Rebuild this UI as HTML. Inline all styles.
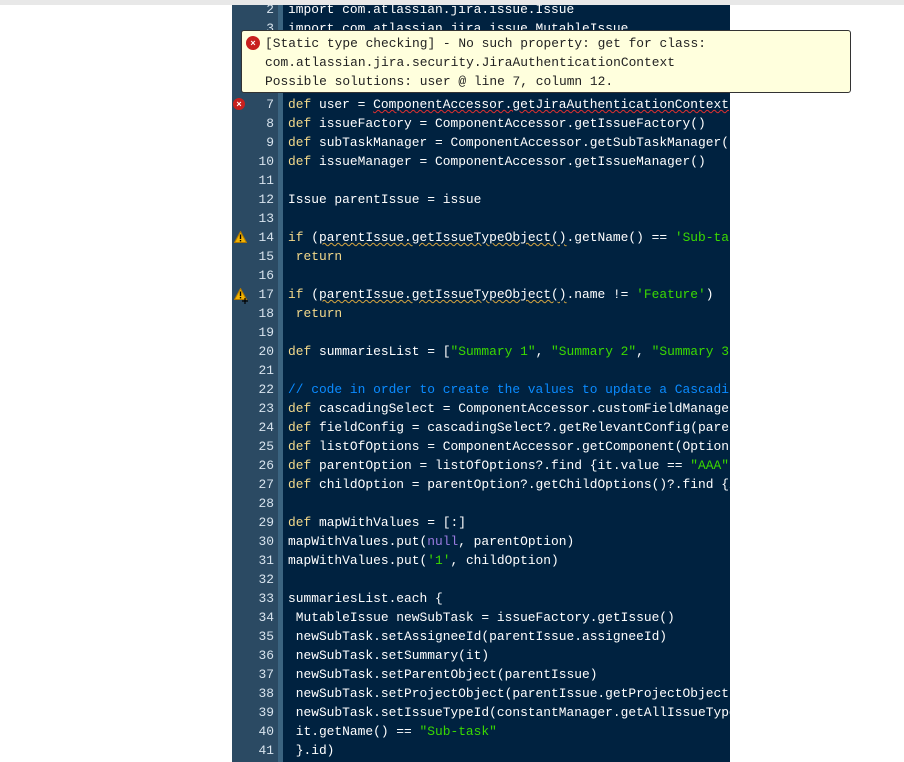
<!DOCTYPE html>
<html><head><meta charset="utf-8"><style>
body{margin:0;width:904px;height:762px;background:#fff;position:relative;overflow:hidden;font-family:"Liberation Mono",monospace}
#top{position:absolute;left:0;top:0;width:904px;height:5px;background:#e8e8e8}
#ed{position:absolute;left:232px;top:5px;width:498px;height:757px;background:#002240;overflow:hidden}
#gut{position:absolute;left:0;top:0;width:46px;height:100%;background:#2b4a63}
#gut2{position:absolute;left:46px;top:0;width:5px;height:100%;background:#3b6480}
.ln{position:absolute;left:0;width:42px;text-align:right;color:#d8e4ee;font-size:12.9px;line-height:19px}
.cl{position:absolute;left:56px;white-space:pre;color:#fff;font-size:12.9px;line-height:19px}
.k{color:#f3d98b}.s{color:#3ad900}.c{color:#0a8bff}.n{color:#9a7be0}
.w{text-decoration:underline wavy #d8a640;text-decoration-thickness:1px}
.e{text-decoration:underline wavy #e03030;text-decoration-thickness:1px}
#tip{position:absolute;left:241px;top:30px;width:608px;height:61px;background:#ffffdd;border:1px solid #333;border-radius:3px;font-size:12.9px;color:#222;line-height:19px}
#tip div{position:absolute;left:23px;white-space:pre}
.err{position:absolute;width:14px;height:14px;border-radius:50%;background:#c8201e;color:#fff;font:bold 9px "Liberation Sans",sans-serif;text-align:center;line-height:14px}
</style></head><body>
<div id="top"></div>
<div id="ed">
<div id="gut"></div><div id="gut2"></div>
<div id="lines"></div>
</div>
<div class="err" style="left:233px;top:98px;width:12px;height:12px;line-height:12px">×</div>
<svg style="position:absolute;left:234px;top:231px" width="13" height="12"><path d="M6.5 0.5 L12.5 11.5 L0.5 11.5 Z" fill="#f2b300" stroke="#b07800"/><rect x="5.8" y="3.5" width="1.4" height="4.5" fill="#000"/><rect x="5.8" y="9" width="1.4" height="1.4" fill="#000"/></svg>
<svg style="position:absolute;left:234px;top:288px" width="16" height="16"><path d="M6.5 0.5 L12.5 11.5 L0.5 11.5 Z" fill="#f2b300" stroke="#b07800"/><rect x="5.8" y="3.5" width="1.4" height="4.5" fill="#000"/><rect x="5.8" y="9" width="1.4" height="1.4" fill="#000"/><path d="M11 10v6M8 13h6" stroke="#000" stroke-width="1.2"/></svg>
<div id="tip">
<div class="err" style="left:4px;top:5px">×</div>
<div style="top:3px">[Static type checking] - No such property: get for class:</div>
<div style="top:22px">com.atlassian.jira.security.JiraAuthenticationContext</div>
<div style="top:41px">Possible solutions: user @ line 7, column 12.</div>
</div>
<script>
var L={
2:'import com.atlassian.jira.issue.Issue',
3:'import com.atlassian.jira.issue.MutableIssue',
7:'<span class=k>def</span> user = <span class=e>ComponentAccessor.getJiraAuthenticationContext</span>().getLoggedInUser()',
8:'<span class=k>def</span> issueFactory = ComponentAccessor.getIssueFactory()',
9:'<span class=k>def</span> subTaskManager = ComponentAccessor.getSubTaskManager()',
10:'<span class=k>def</span> issueManager = ComponentAccessor.getIssueManager()',
12:'Issue parentIssue = issue',
14:'<span class=k>if</span> (<span class=w>parentIssue.getIssueTypeObject()</span>.getName() == <span class=s>\'Sub-task\'</span>)',
15:' <span class=k>return</span>',
17:'<span class=k>if</span> (<span class=w>parentIssue.getIssueTypeObject()</span>.name != <span class=s>\'Feature\'</span>)',
18:' <span class=k>return</span>',
20:'<span class=k>def</span> summariesList = [<span class=s>"Summary 1"</span>, <span class=s>"Summary 2"</span>, <span class=s>"Summary 3"</span>]',
22:'<span class=c>// code in order to create the values to update a Cascading select</span>',
23:'<span class=k>def</span> cascadingSelect = ComponentAccessor.customFieldManager.getCustomField',
24:'<span class=k>def</span> fieldConfig = cascadingSelect?.getRelevantConfig(parentIssue)',
25:'<span class=k>def</span> listOfOptions = ComponentAccessor.getComponent(OptionsManager)',
26:'<span class=k>def</span> parentOption = listOfOptions?.find {it.value == <span class=s>"AAA"</span>}',
27:'<span class=k>def</span> childOption = parentOption?.getChildOptions()?.find {it.value',
29:'<span class=k>def</span> mapWithValues = [:]',
30:'mapWithValues.put(<span class=n>null</span>, parentOption)',
31:'mapWithValues.put(<span class=s>\'1\'</span>, childOption)',
33:'summariesList.each {',
34:' MutableIssue newSubTask = issueFactory.getIssue()',
35:' newSubTask.setAssigneeId(parentIssue.assigneeId)',
36:' newSubTask.setSummary(it)',
37:' newSubTask.setParentObject(parentIssue)',
38:' newSubTask.setProjectObject(parentIssue.getProjectObject())',
39:' newSubTask.setIssueTypeId(constantManager.getAllIssueTypeObjects().find {',
40:' it.getName() == <span class=s>"Sub-task"</span>',
41:' }.id)'};
var h='';
for(var n=2;n<=41;n++){var t=(n-2)*19-5;h+='<div class=ln style="top:'+t+'px">'+n+'</div>';if(L[n])h+='<div class=cl style="top:'+t+'px">'+L[n]+'</div>';}
document.getElementById('lines').innerHTML=h;
</script>
</body></html>
